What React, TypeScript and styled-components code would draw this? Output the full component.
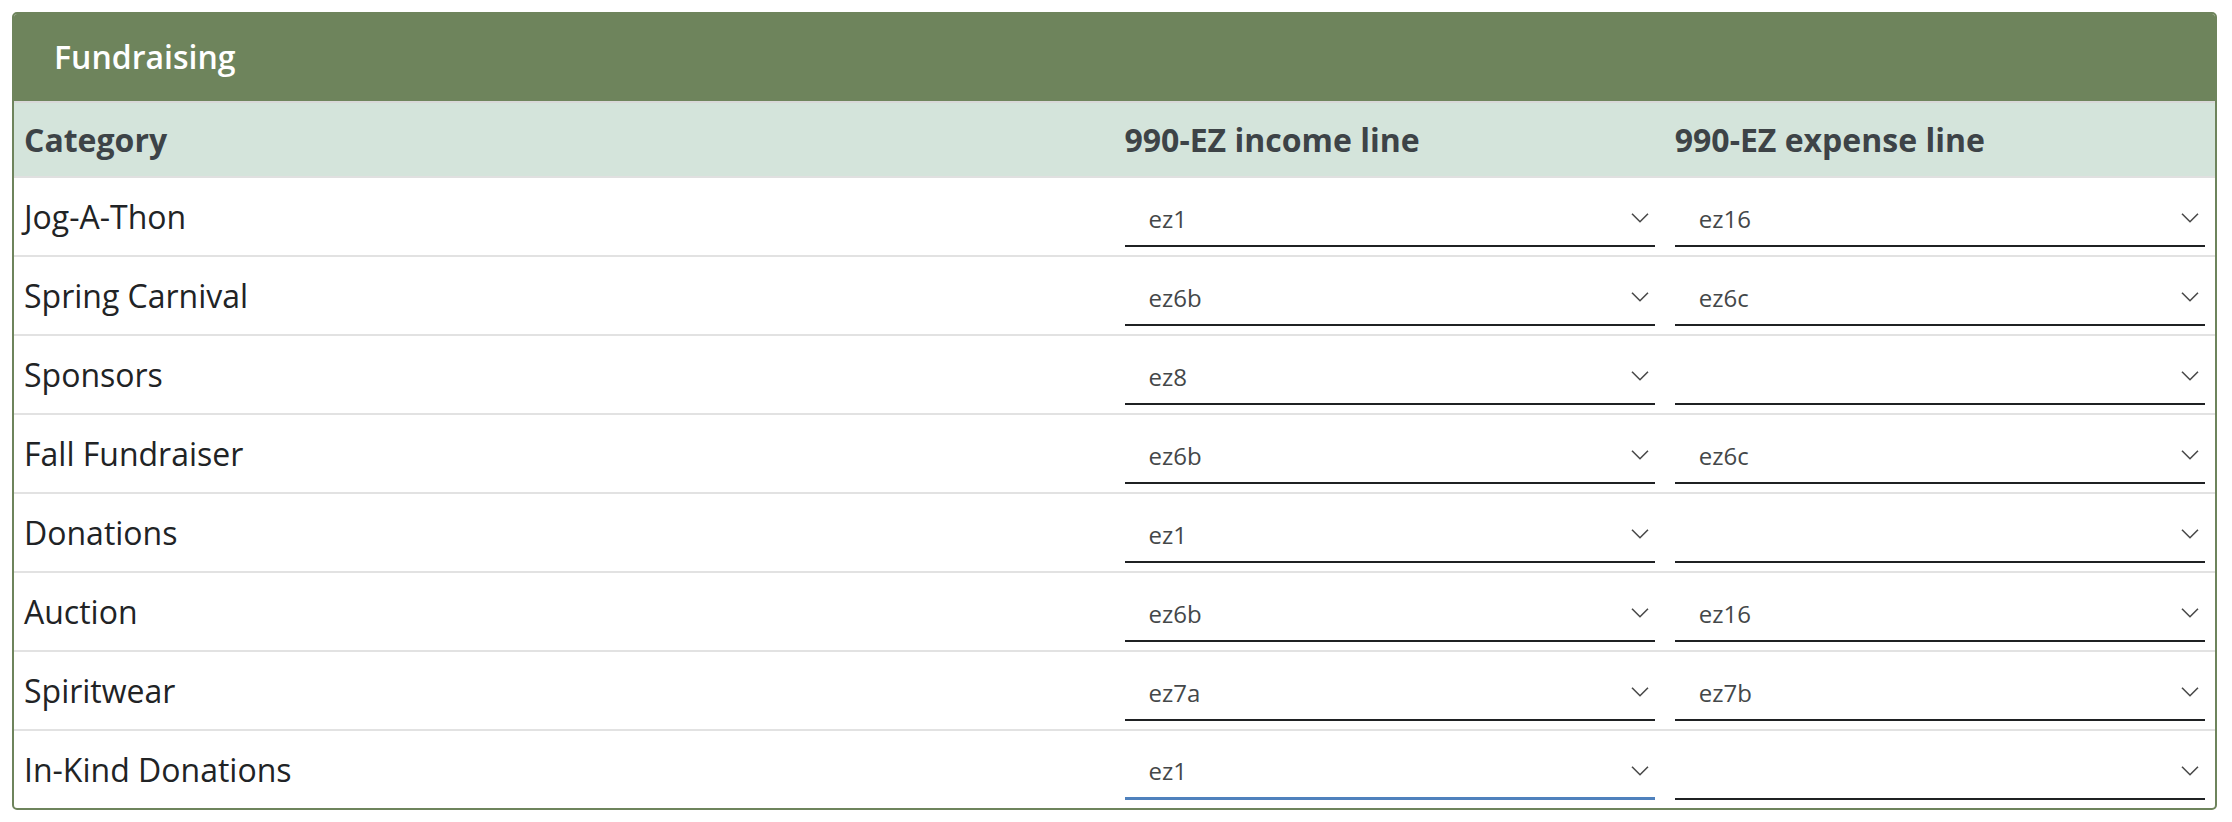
import React, { useState } from "react"
import styled, { createGlobalStyle } from "styled-components"

const GlobalStyle = createGlobalStyle`
  html, body {
    margin: 0;
    padding: 0;
    background: #ffffff;
    font-family: "Open Sans", "Liberation Sans", sans-serif;
  }
`

type Row = {
  category: string
  income: string
  expense: string
}

const rows: Row[] = [
  { category: "Jog-A-Thon", income: "ez1", expense: "ez16" },
  { category: "Spring Carnival", income: "ez6b", expense: "ez6c" },
  { category: "Sponsors", income: "ez8", expense: "" },
  { category: "Fall Fundraiser", income: "ez6b", expense: "ez6c" },
  { category: "Donations", income: "ez1", expense: "" },
  { category: "Auction", income: "ez6b", expense: "ez16" },
  { category: "Spiritwear", income: "ez7a", expense: "ez7b" },
  { category: "In-Kind Donations", income: "ez1", expense: "" },
]

const options = ["", "ez1", "ez6a", "ez6b", "ez6c", "ez7a", "ez7b", "ez8", "ez16"]

const Chevron = () => (
  <ChevronWrapper>
    <svg width="18" height="11" viewBox="0 0 18 11" fill="none">
      <path d="M1 1.2 L9 9.2 L17 1.2" stroke="#4a4a4a" strokeWidth="1.6" />
    </svg>
  </ChevronWrapper>
)

const LineSelect = ({
  value,
  focused,
}: {
  value: string
  focused?: boolean
}) => {
  const [current, setCurrent] = useState(value)
  return (
    <SelectWrapper $focused={focused}>
      <NativeSelect value={current} onChange={(e) => setCurrent(e.target.value)}>
        {options.map((o) => (
          <option key={o} value={o}>
            {o}
          </option>
        ))}
      </NativeSelect>
      <Chevron />
    </SelectWrapper>
  )
}

export default function App() {
  return (
    <Page>
      <GlobalStyle />
      <Card>
        <Title>Fundraising</Title>
        <HeaderRow>
          <HeaderCell>Category</HeaderCell>
          <HeaderCell>990-EZ income line</HeaderCell>
          <HeaderCell>990-EZ expense line</HeaderCell>
        </HeaderRow>
        {rows.map((row, i) => (
          <BodyRow key={row.category} $last={i === rows.length - 1}>
            <CategoryCell>{row.category}</CategoryCell>
            <SelectCell>
              <LineSelect value={row.income} focused={i === rows.length - 1} />
            </SelectCell>
            <SelectCell>
              <LineSelect value={row.expense} />
            </SelectCell>
          </BodyRow>
        ))}
      </Card>
    </Page>
  )
}

const Page = styled.div`
  padding: 12px 15px 12px 12px;
`

const Card = styled.section`
  border: 2px solid #6e845c;
  border-radius: 5px;
  overflow: hidden;
  background: #ffffff;
`

const Title = styled.h2`
  margin: 0;
  height: 85px;
  display: flex;
  align-items: center;
  padding: 0 0 2px 40px;
  background: #6e845c;
  color: #ffffff;
  font-size: 32px;
  font-weight: 600;
  border-bottom: 2px solid #d8d8d8;
`

const HeaderRow = styled.div`
  display: grid;
  grid-template-columns: 2fr 1fr 1fr;
  height: 73px;
  background: #d4e4db;
  border-bottom: 2px solid #e0e0e0;
`

const HeaderCell = styled.div`
  display: flex;
  align-items: center;
  padding: 0 10px;
  color: #3d4347;
  font-size: 32px;
  font-weight: 700;
`

const BodyRow = styled.div<{ $last?: boolean }>`
  display: grid;
  grid-template-columns: 2fr 1fr 1fr;
  height: 77px;
  border-bottom: ${(p) => (p.$last ? "none" : "2px solid #e2e2e2")};
`

const CategoryCell = styled.div`
  display: flex;
  align-items: center;
  padding: 0 10px;
  color: #212325;
  font-size: 32px;
`

const SelectCell = styled.div`
  display: flex;
  align-items: flex-end;
  padding: 0 10px 8px;
`

const SelectWrapper = styled.div<{ $focused?: boolean }>`
  position: relative;
  width: 100%;
  height: 56px;
  box-sizing: border-box;
  border-bottom: ${(p) => (p.$focused ? "3px solid #4f81bd" : "2px solid #1f2123")};
`

const NativeSelect = styled.select`
  appearance: none;
  -webkit-appearance: none;
  width: 100%;
  height: 100%;
  border: none;
  outline: none;
  background: transparent;
  padding: 0 40px 0 24px;
  font-family: "Open Sans", "Liberation Sans", sans-serif;
  font-size: 24px;
  color: #444749;
  cursor: pointer;
`

const ChevronWrapper = styled.div`
  position: absolute;
  right: 6px;
  top: 50%;
  transform: translateY(-50%);
  display: flex;
  pointer-events: none;
`
